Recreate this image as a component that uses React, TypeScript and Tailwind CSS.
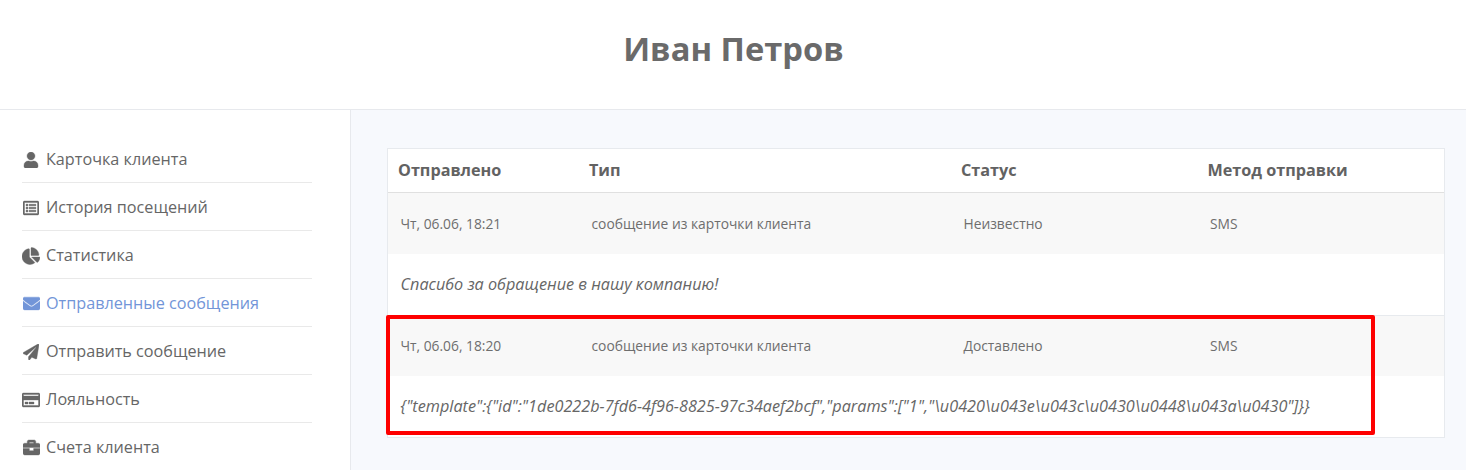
import { FaUser, FaRegListAlt, FaChartPie, FaEnvelope, FaPaperPlane, FaRegCreditCard, FaBriefcase } from "react-icons/fa";

const items = [
  { label: "Карточка клиента", Icon: FaUser, size: 16 },
  { label: "История посещений", Icon: FaRegListAlt, size: 16 },
  { label: "Статистика", Icon: FaChartPie, size: 18 },
  { label: "Отправленные сообщения", Icon: FaEnvelope, size: 17, active: true },
  { label: "Отправить сообщение", Icon: FaPaperPlane, size: 16 },
  { label: "Лояльность", Icon: FaRegCreditCard, size: 18 },
  { label: "Счета клиента", Icon: FaBriefcase, size: 17 },
];

const cols = "grid grid-cols-[191px_372px_247px_1fr]";

function Row({ date, status, message, first }: { date: string; status: string; message: string; first?: boolean }) {
  return (
    <div className={first ? "border-b border-[#e7eaee]" : ""}>
      <div className={`${cols} ${first ? "h-[61px] pt-[1px]" : "h-[60px]"} items-center bg-[#f8f8f8] pl-[12.5px] text-[13.8px] text-[#6e6e6e]`}>
        <div>{date}</div>
        <div>сообщение из карточки клиента</div>
        <div>{status}</div>
        <div className="-ml-[0.5px]">SMS</div>
      </div>
      <div className="flex h-[61px] items-center pb-[1px] pl-[12.5px] text-[16.23px] italic text-[#666666]">{message}</div>
    </div>
  );
}

export default function App() {
  return (
    <div className="h-[470px] w-[1466px] overflow-hidden bg-white font-['Open_Sans',sans-serif] text-[#666666]">
      <header className="flex h-[110px] items-center justify-center border-b border-[#e7e9ed] pb-[12px]">
        <h1 className="ml-[1px] text-[32.7px] font-bold text-[#6a6a6a]">Иван Петров</h1>
      </header>
      <div className="flex h-[360px]">
        <aside className="w-[351px] shrink-0 border-r border-[#e7e9ed] pl-[22px] pr-[38px] pt-[25px]">
          {items.map(({ label, Icon, size, active }, i) => (
            <div
              key={label}
              className={`flex h-[48px] items-center ${i < items.length - 1 ? "border-b border-[#e9e9e9] pt-[2px]" : ""} ${active ? "text-[#7295d8]" : "text-[#666666]"}`}
            >
              <span className="mr-[6px] flex w-[18px] justify-center">
                <Icon size={size} stroke="currentColor" strokeWidth={12} />
              </span>
              <span className="text-[16.2px]">{label}</span>
            </div>
          ))}
        </aside>
        <main className="relative flex-1 bg-[#f7f9fd] pl-[36px] pr-[21px] pt-[38px]">
          <div className="border border-[#e7eaee] bg-white">
            <div className={`${cols} h-[44px] items-center border-b border-[#e0e0e0] pl-[10px] text-[16.2px] font-bold text-[#626262]`}>
              <div>Отправлено</div>
              <div>Тип</div>
              <div>Статус</div>
              <div className="-ml-[0.5px]">Метод отправки</div>
            </div>
            <Row first date="Чт, 06.06, 18:21" status="Неизвестно" message="Спасибо за обращение в нашу компанию!" />
            <Row
              date="Чт, 06.06, 18:20"
              status="Доставлено"
              message={'{"template":{"id":"1de0222b-7fd6-4f96-8825-97c34aef2bcf","params":["1","\\u0420\\u043e\\u043c\\u0430\\u0448\\u043a\\u0430"]}}'}
            />
          </div>
          <div className="absolute left-[35px] top-[205px] h-[120px] w-[989px] rounded-[2px] border-[4px] border-[#fe0000]" />
        </main>
      </div>
    </div>
  );
}
